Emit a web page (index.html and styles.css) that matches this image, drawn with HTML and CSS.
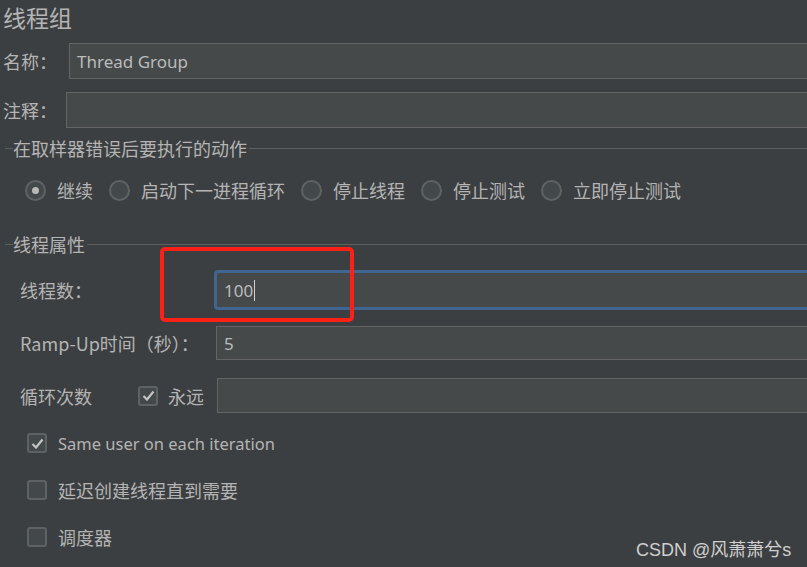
FILE: index.html
```html
<!DOCTYPE html>
<html>
    <head>
        <title>线程组</title>
        <link rel="stylesheet" href="styles.css">
    </head>
    <body>
        <div id="page">
            <div class="title">线程组</div>

            <div class="row row-name">
                <span class="lbl lbl-name">名称：</span>
                <div class="input">Thread Group</div>
            </div>
            <div class="row row-note">
                <span class="lbl lbl-note">注释：</span>
                <div class="input"></div>
            </div>

            <div class="group group-error">
                <span class="group-lead"></span>
                <span class="group-text">在取样器错误后要执行的动作</span>
                <span class="group-line"></span>
            </div>
            <div class="radios">
                <span class="radio checked"></span><span class="radio-text">继续</span>
                <span class="radio"></span><span class="radio-text">启动下一进程循环</span>
                <span class="radio"></span><span class="radio-text">停止线程</span>
                <span class="radio"></span><span class="radio-text">停止测试</span>
                <span class="radio"></span><span class="radio-text">立即停止测试</span>
            </div>

            <div class="group group-thread">
                <span class="group-lead"></span>
                <span class="group-text">线程属性</span>
                <span class="group-line"></span>
            </div>

            <div class="row row-threads">
                <span class="lbl lbl-threads">线程数：</span>
                <div class="input focused">100<span class="caret"></span></div>
            </div>
            <div class="row row-ramp">
                <span class="lbl lbl-ramp">Ramp-Up时间（秒）：</span>
                <div class="input">5</div>
            </div>
            <div class="row row-loop">
                <span class="lbl lbl-loop">循环次数</span>
                <span class="check on">
                    <svg width="13" height="11" viewBox="0 0 13 11"><polyline points="1.5,6 5,9.5 11.5,1.5" fill="none" stroke="#c4c4c4" stroke-width="2.2"/></svg>
                </span>
                <span class="check-text forever">永远</span>
                <div class="input"></div>
            </div>

            <div class="opt opt-first">
                <span class="check on">
                    <svg width="13" height="11" viewBox="0 0 13 11"><polyline points="1.5,6 5,9.5 11.5,1.5" fill="none" stroke="#c4c4c4" stroke-width="2.2"/></svg>
                </span>
                <span class="check-text latin">Same user on each iteration</span>
            </div>
            <div class="opt">
                <span class="check"></span>
                <span class="check-text">延迟创建线程直到需要</span>
            </div>
            <div class="opt">
                <span class="check"></span>
                <span class="check-text">调度器</span>
            </div>

            <div class="mark"></div>
            <div class="watermark">CSDN @风萧萧兮s</div>
        </div>
    </body>
</html>
```

FILE: styles.css
```css
html, body{
    margin: 0;
    height: 100%;
    overflow: hidden;
    background: #3c3f41;
}
#page{
    position: relative;
    height: 567px;
    color: #b4b4b4;
    font-family: "Noto Sans CJK SC", sans-serif;
    font-size: 18px;
}
.title{
    height: 34px;
    line-height: 34px;
    padding-left: 3px;
    font-size: 23px;
}
.row{
    display: flex;
    align-items: center;
}
.lbl{
    flex: none;
}
.input{
    flex: 1;
    align-self: stretch;
    box-sizing: border-box;
    display: flex;
    align-items: center;
    padding-left: 7px;
    background: #45494a;
    border: 1px solid #646464;
    border-right: 0;
    color: #bbbbbb;
    font-family: "Noto Sans", sans-serif;
    font-size: 17px;
}
.row-name{ margin-top: 9px; height: 36px; padding-left: 3px; }
.lbl-name{ width: 66px; }
.row-note{ margin-top: 13px; height: 36px; padding-left: 3px; }
.lbl-note{ width: 63px; }

.group{
    display: flex;
    align-items: center;
    height: 24px;
}
.group-lead{
    flex: none;
    width: 0;
    margin-left: 5px;
    padding-left: 8px;
    border-top: 1px solid #5e6060;
}
.group-text{
    padding-right: 2px;
}
.group-line{
    flex: 1;
    border-top: 1px solid #5e6060;
}
.group-error{ margin-top: 8px; }
.group-thread{ margin-top: 30px; }

.radios{
    display: flex;
    align-items: center;
    height: 24px;
    margin-top: 18px;
    padding-left: 25px;
}
.radio{
    flex: none;
    box-sizing: border-box;
    width: 21px;
    height: 21px;
    border-radius: 50%;
    border: 2px solid #5f6263;
    background: #43494a;
    display: flex;
    align-items: center;
    justify-content: center;
}
.radio.checked::after{
    content: "";
    width: 7px;
    height: 7px;
    border-radius: 50%;
    background: #b9b9b9;
}
.radio-text{
    margin-left: 11px;
    margin-right: 16px;
}

.row-threads{ margin-top: 14px; height: 40px; padding-left: 20px; }
.lbl-threads{ width: 194px; }
.row-threads .input{
    border: 3px solid #3f6590;
    border-right: 0;
    border-radius: 4px 0 0 4px;
}
.caret{
    width: 1px;
    height: 21px;
    background: #d0d0d0;
    margin-left: 1px;
}
.row-ramp{ margin-top: 16px; height: 34px; padding-left: 20px; }
.lbl-ramp{ width: 196px; }
.row-loop{ margin-top: 18px; height: 35px; padding-left: 20px; }
.lbl-loop{ width: 118px; }

.check{
    flex: none;
    box-sizing: border-box;
    width: 20px;
    height: 20px;
    border: 2px solid #5f6263;
    border-radius: 3px;
    background: #43494a;
    display: flex;
    align-items: center;
    justify-content: center;
}
.check-text{
    margin-left: 11px;
}
.latin{
    font-family: "Noto Sans", sans-serif;
    font-size: 16.5px;
}
.forever{
    flex: none;
    width: 49px;
    margin-left: 10px;
}
.opt{
    display: flex;
    align-items: center;
    height: 20px;
    margin-top: 27px;
    padding-left: 27px;
}
.opt-first{ margin-top: 20px; }

.mark{
    position: absolute;
    left: 160px;
    top: 247px;
    width: 186px;
    height: 67px;
    border: 4px solid #fb2116;
    border-radius: 5px;
}
.watermark{
    position: absolute;
    left: 636px;
    top: 535px;
    color: #cfcfcf;
    font-family: "Liberation Sans", "Noto Sans CJK SC", sans-serif;
    font-size: 18px;
}
```
